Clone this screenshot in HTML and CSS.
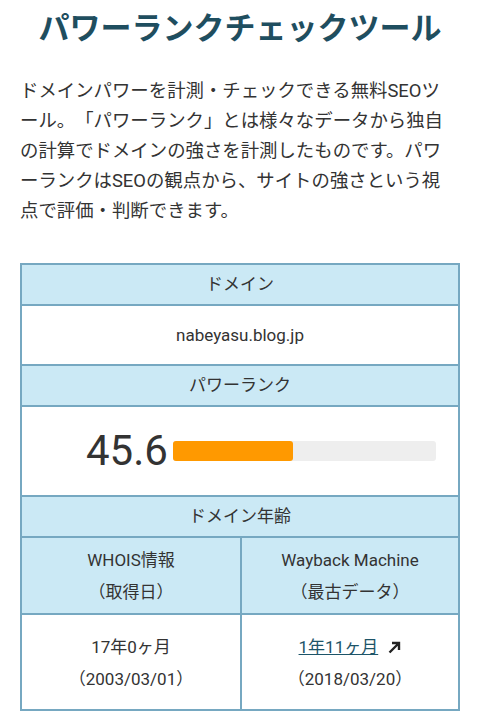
FILE: index.html
```html
<!DOCTYPE html>
<html lang="ja">
  <head>
    <meta charset="UTF-8" />
    <meta name="viewport" content="width=device-width, initial-scale=1.0" />
    <title>パワーランクチェックツール</title>
    <link rel="stylesheet" href="styles.css">
  </head>
  <body>
    <div class="container">
      <h1>パワーランクチェックツール</h1>
      <p class="lead">ドメインパワーを計測・チェックできる無料SEOツール。「パワーランク」とは様々なデータから独自の計算でドメインの強さを計測したものです。パワーランクはSEOの観点から、サイトの強さという視点で評価・判断できます。</p>

      <div class="result">
        <div class="row head">ドメイン</div>
        <div class="row domain">nabeyasu.blog.jp</div>
        <div class="row head">パワーランク</div>
        <div class="row score">
          <span class="score-num">45.6</span>
          <div class="bar"><div class="bar-fill" style="width: 45.6%"></div></div>
        </div>
        <div class="row head">ドメイン年齢</div>
        <div class="row split head-split">
          <div class="cell">WHOIS情報<br>（取得日）</div>
          <div class="cell">Wayback Machine<br>（最古データ）</div>
        </div>
        <div class="row split value-split">
          <div class="cell">17年0ヶ月<br>（2003/03/01）</div>
          <div class="cell">
            <a href="#">1年11ヶ月</a>
            <svg class="ext" width="13" height="13" viewBox="0 0 13 13">
              <path d="M1.5 11.5 L11 2 M4 2 H11 V9" fill="none" stroke="#222" stroke-width="2.4"/>
            </svg>
            <br>（2018/03/20）
          </div>
        </div>
      </div>
    </div>
  </body>
</html>
```

FILE: styles.css
```css
body {
  margin: 0;
  padding: 0;
  background-color: white;
  color: #333;
  font-family: Roboto, "Noto Sans CJK JP", sans-serif;
  text-spacing-trim: space-all;
}
.container {
  padding: 6px 20px 10px;
}
h1 {
  margin: 0;
  font-size: 31px;
  line-height: 46px;
  font-weight: bold;
  text-align: center;
  color: #1f4e5f;
}
.lead {
  margin: 24px 4px 37px 0;
  font-size: 18.4px;
  line-height: 30px;
}
.result {
  border: 2px solid #76a8c1;
  text-align: center;
  font-size: 17px;
}
.row {
  border-top: 2px solid #76a8c1;
}
.row:first-child {
  border-top: none;
}
.head {
  background-color: #cbe9f5;
  line-height: 39px;
}
.domain {
  line-height: 58px;
}
.score {
  display: flex;
  align-items: center;
  height: 88px;
  padding: 0 22px 0 64px;
}
.score-num {
  font-size: 42px;
  line-height: 1;
  margin-right: 5px;
}
.bar {
  flex: 1;
  height: 20px;
  background-color: #eeeeee;
  border-radius: 3px;
}
.bar-fill {
  height: 100%;
  background-color: #ff9900;
  border-radius: 3px;
}
.split {
  display: grid;
  grid-template-columns: 1fr 1fr;
  line-height: 32px;
}
.split .cell + .cell {
  border-left: 2px solid #76a8c1;
}
.head-split {
  background-color: #cbe9f5;
}
.head-split .cell {
  padding: 6px 0 5px;
}
.value-split .cell {
  padding: 16px 0 14px;
}
.value-split a {
  color: #1d5468;
  text-decoration: underline;
}
.ext {
  margin-left: 6px;
  vertical-align: -1px;
}
```
